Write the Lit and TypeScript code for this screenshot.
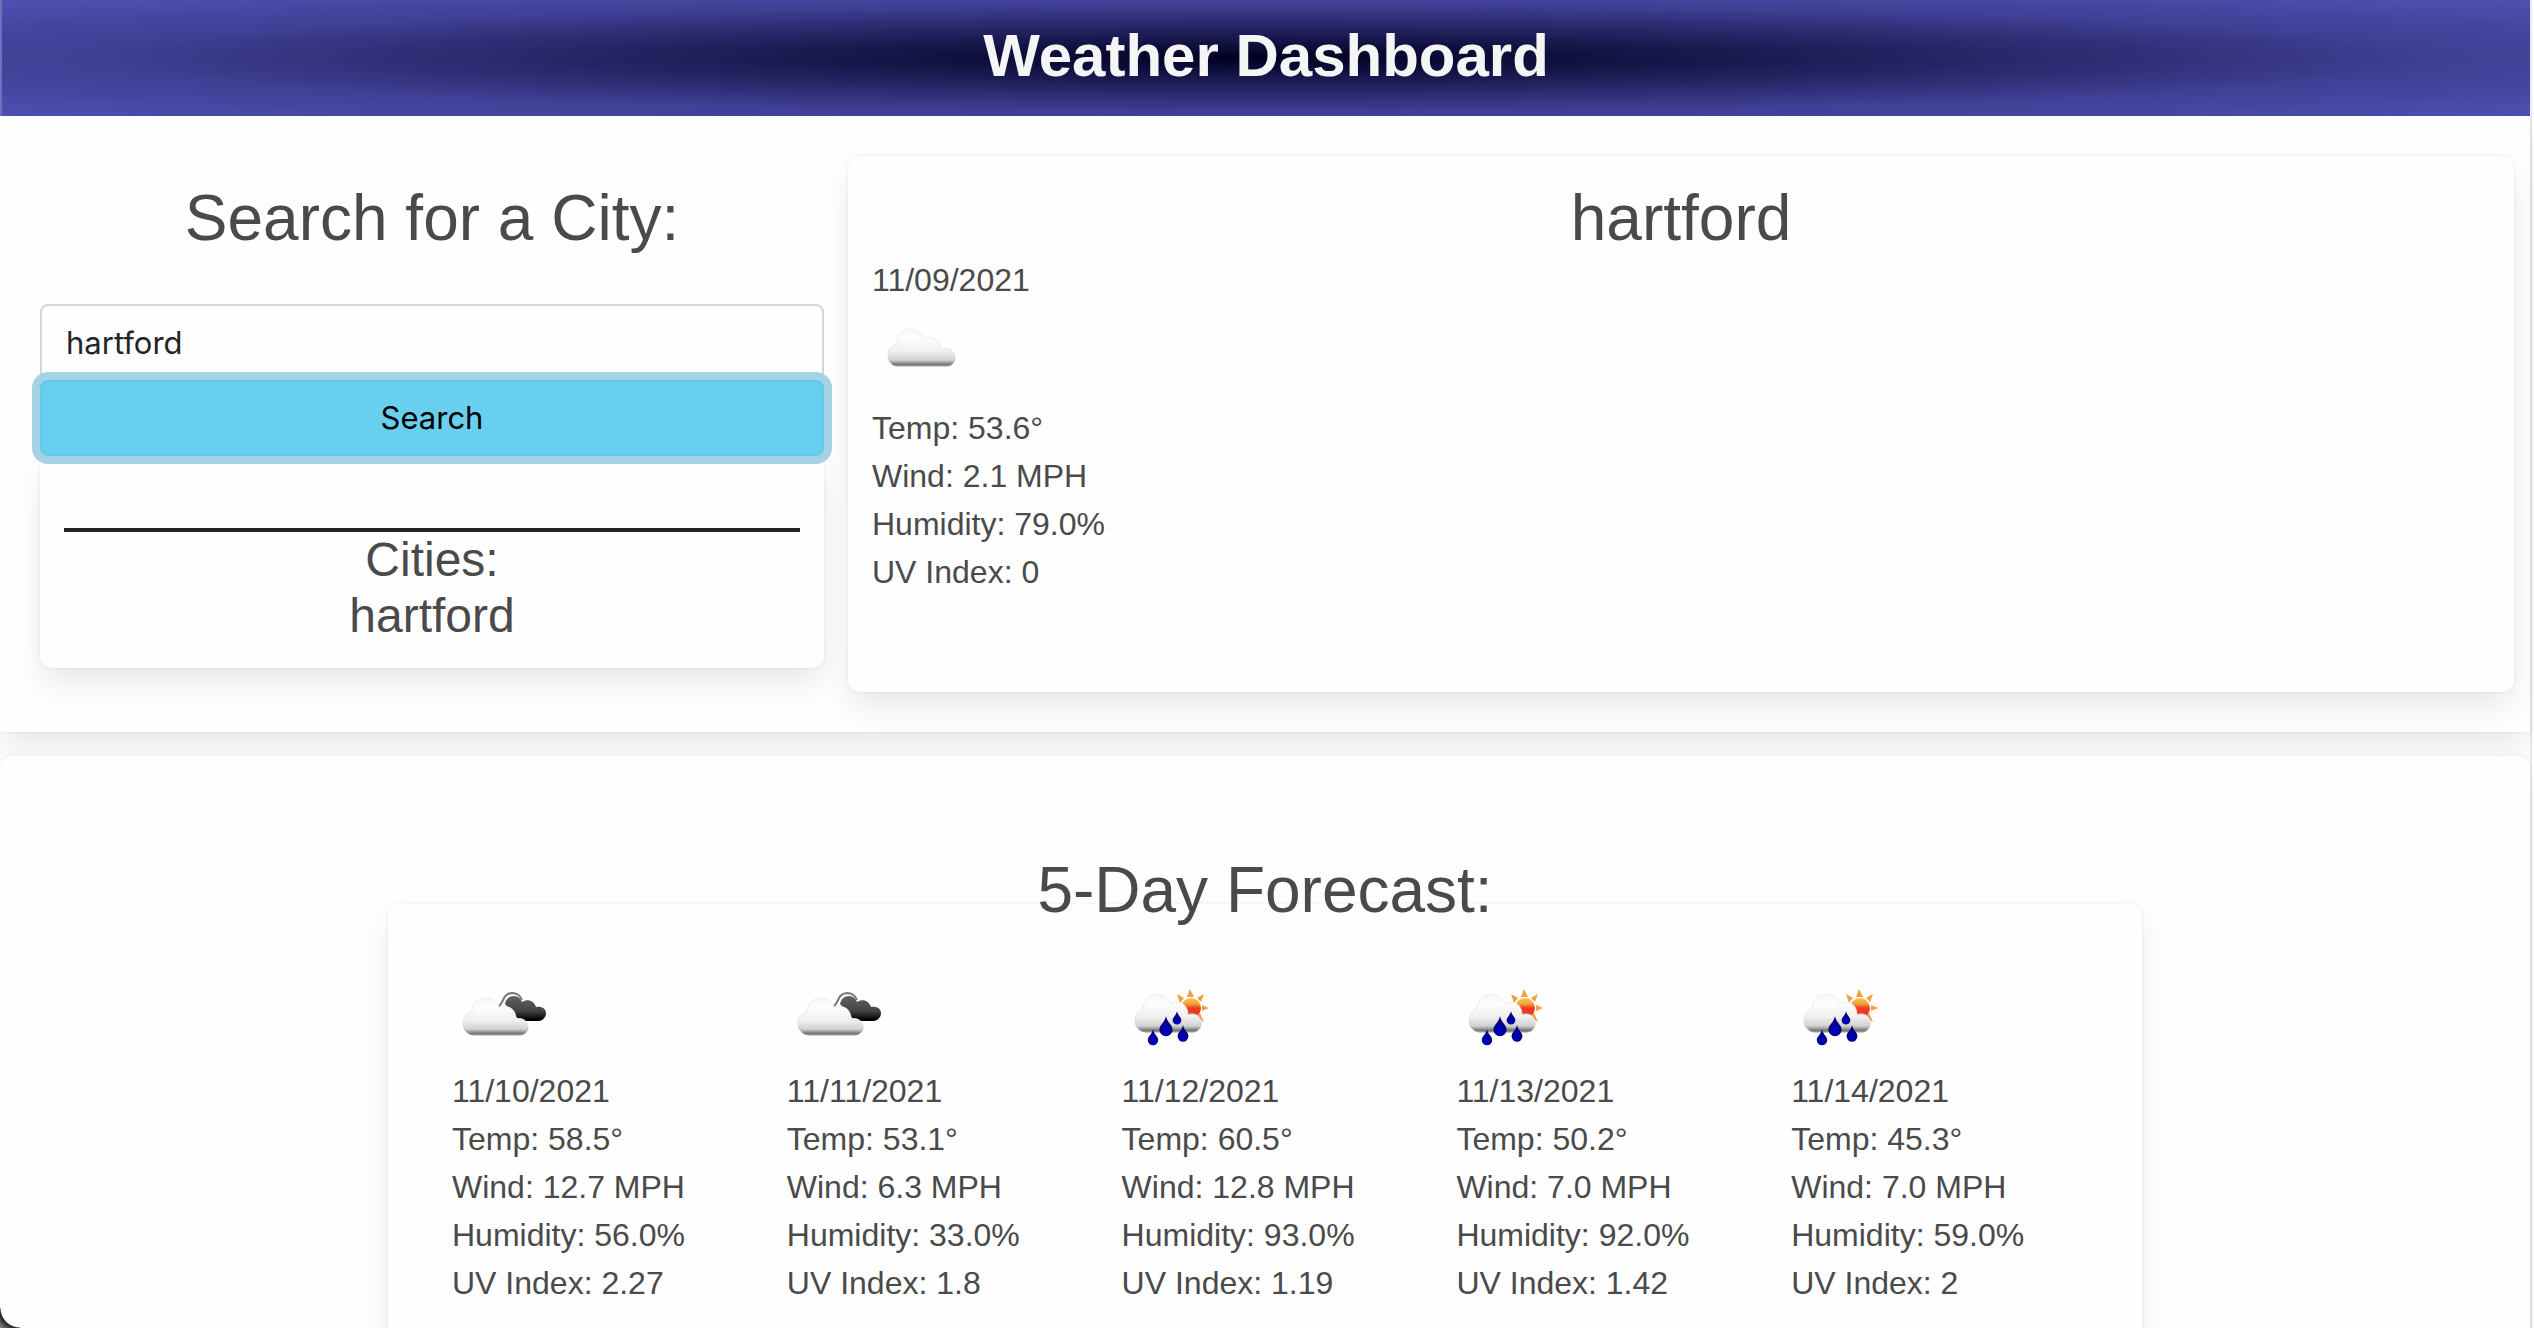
import { LitElement, html, css, svg } from "lit";
import { customElement } from "lit/decorators.js";

type Kind = "cloud" | "broken" | "rain";

interface Day {
  date: string;
  icon: Kind;
  temp: string;
  wind: string;
  humidity: string;
  uv: string;
}

const today: Day = { date: "11/09/2021", icon: "cloud", temp: "53.6", wind: "2.1", humidity: "79.0", uv: "0" };

const forecast: Day[] = [
  { date: "11/10/2021", icon: "broken", temp: "58.5", wind: "12.7", humidity: "56.0", uv: "2.27" },
  { date: "11/11/2021", icon: "broken", temp: "53.1", wind: "6.3", humidity: "33.0", uv: "1.8" },
  { date: "11/12/2021", icon: "rain", temp: "60.5", wind: "12.8", humidity: "93.0", uv: "1.19" },
  { date: "11/13/2021", icon: "rain", temp: "50.2", wind: "7.0", humidity: "92.0", uv: "1.42" },
  { date: "11/14/2021", icon: "rain", temp: "45.3", wind: "7.0", humidity: "59.0", uv: "2" },
];

@customElement("weather-icon")
export class WeatherIcon extends LitElement {
  static properties = { kind: { type: String } };
  declare kind: Kind;

  static styles = css`
    :host { display: block; width: 100px; height: 100px; }
    .art { display: block; width: 100px; height: 100px; }
  `;

  private gradients() {
    return svg`
      <defs>
        <linearGradient id="white" x1="0" y1="0" x2="0" y2="1">
          <stop offset="0" stop-color="#f6f6f6" />
          <stop offset="0.25" stop-color="#fdfdfd" />
          <stop offset="0.6" stop-color="#f0f0f0" />
          <stop offset="0.84" stop-color="#d2d2d2" />
          <stop offset="0.96" stop-color="#757575" />
          <stop offset="1" stop-color="#8a8a8a" />
        </linearGradient>
        <linearGradient id="dark" x1="0" y1="0" x2="0" y2="1">
          <stop offset="0" stop-color="#626262" />
          <stop offset="0.6" stop-color="#444444" />
          <stop offset="0.95" stop-color="#000000" />
        </linearGradient>
        <linearGradient id="rim" x1="0" y1="0" x2="0" y2="1">
          <stop offset="0" stop-color="#efefef" />
          <stop offset="0.7" stop-color="#e2e2e2" />
          <stop offset="1" stop-color="#9a9a9a" />
        </linearGradient>
        <linearGradient id="sun" x1="0" y1="0" x2="0" y2="1">
          <stop offset="0" stop-color="#f4c84a" />
          <stop offset="0.3" stop-color="#f2a03a" />
          <stop offset="0.5" stop-color="#ec3a24" />
          <stop offset="1" stop-color="#ec3a24" />
        </linearGradient>
        <radialGradient id="drop" cx="0.5" cy="0.7" r="0.6">
          <stop offset="0" stop-color="#0000d0" />
          <stop offset="1" stop-color="#000064" />
        </radialGradient>
      </defs>`;
  }

  private art() {
    if (this.kind === "cloud") {
      return svg`<path fill="url(#white)" stroke="url(#rim)" stroke-width="1"
        d="M25 62C19 62 16 56 16 50C16 45 20 41 25 40C25 31 31 25 39 25C45 25 50 29 53 35C58 31 66 34 69 45C77 43 83 47 83 53C83 58 80 62 75 62Z" />`;
    }
    if (this.kind === "broken") {
      return svg`
        <path fill="none" stroke="#777777" stroke-width="2" d="M47 39C52 36 50 27 60 26C65 26 68 28 70 33" />
        <path fill="url(#dark)"
          d="M53 37C54 32 57 29 62 29C66 29 69 32 70 35C76 31 82 34 84 40C90 39 94 42 94 46C94 51 90 54 86 54H68Z" />
        <path fill="url(#white)" stroke="url(#rim)" stroke-width="1"
          d="M22 68C15 68 11 62 11 56C11 50 15 46 20 45C20 36 26 31 34 31C41 31 45 35 47 41C56 37 64 42 64 52C71 50 76 55 76 60C76 65 72 68 68 68Z" />`;
    }
    return svg`
      <path fill="#f0a040"
        d="M65 30L68 22L72 30ZM75 31L82 27L79 35ZM80 38L87 41L80 44ZM78 46L82 55L74 50ZM62 31L55 27L58 36Z" />
      <circle cx="69" cy="41" r="10" fill="url(#sun)" />
      <path fill="url(#white)" stroke="url(#rim)" stroke-width="1"
        d="M24 65C17 65 13 59 13 53C13 47 17 43 21 41C22 32 28 27 35 27C42 27 46 31 49 37C58 32 66 38 66 48C72 45 79 49 79 56C79 61 76 65 71 65Z" />
      ${[[31, 63, 0.87], [44, 50, 1.1], [55, 45, 0.72], [61, 59, 0.9]].map(
        ([x, y, s]) => svg`<path fill="url(#drop)" transform="translate(${x} ${y}) scale(${s})"
          d="M0-1C1 5 6 7 6 11.500A6 6 0 0 1-6 11.500C-6 7-1 5 0-1Z" />`,
      )}`;
  }

  render() {
    return html`<svg class="art" viewBox="0 0 100 100" aria-hidden="true">${this.gradients()}${this.art()}</svg>`;
  }
}

@customElement("app-root")
export class AppRoot extends LitElement {
  static styles = css`
    :host {
      display: block;
      box-sizing: border-box;
      height: 100vh;
      overflow: hidden auto;
      scrollbar-width: none;
      background: #fefefe;
      color: #4a4a4a;
      font-family: "Liberation Sans", Arial, sans-serif;
      font-size: 32px;
      line-height: 48px;
    }
    * { box-sizing: border-box; }
    h1, h2, h3, p, ul { margin: 0; padding: 0; font-weight: 400; }
    ul { list-style: none; }
    .page { margin-right: 2px; border-right: 2px solid #ebebeb; }
    .banner {
      padding: 20px 0 24px;
      border-left: 2px solid #7070bd;
      background: radial-gradient(#000022, #3f3f94 65%, #5050b4);
      color: #f5f5f5;
      text-align: center;
    }
    .title { font-size: 60px; line-height: 72px; font-weight: 700; }
    .card, .top {
      background: #fefefe;
      box-shadow: 0 16px 32px -4px rgba(10, 10, 10, 0.1), 0 0 0 2px rgba(10, 10, 10, 0.02);
    }
    .card { border-radius: 12px; }
    .top {
      display: grid;
      grid-template-columns: 784fr 1666fr;
      gap: 24px;
      align-items: start;
      padding: 40px 16px 40px 40px;
    }
    .heading { font-size: 64px; line-height: 76px; text-align: center; }
    .search { display: flex; flex-direction: column; padding-top: 24px; }
    .field, .button {
      height: 76px;
      border: 2px solid #ced4da;
      border-radius: 8px;
      font: 31px/48px Inter, sans-serif;
    }
    .field {
      width: 100%;
      margin-top: 48px;
      padding: 0 24px;
      background: #fefefe;
      color: #212529;
    }
    .button {
      z-index: 1;
      border-color: #62c9ec;
      background: #68cfee;
      box-shadow: 0 0 0 8px #a5d3e3;
      color: #000;
    }
    .history { padding: 72px 24px 24px; text-align: center; font-size: 48px; line-height: 56px; }
    .cities { border-top: 4px solid #212529; font-size: 48px; line-height: 56px; }
    .current { min-height: 536px; padding: 24px; }
    .outlook { margin-top: 24px; padding: 96px 388px 48px; position: relative; }
    .outlook-title { position: relative; z-index: 1; margin-bottom: -24px; }
    .days { display: grid; grid-template-columns: repeat(5, 1fr); padding: 63px 16px 48px 64px; }
    .corner {
      position: fixed;
      left: 0;
      bottom: 0;
      width: 20px;
      height: 20px;
      background: radial-gradient(circle at 100% 0, transparent 19px, #222222 20px, #8a8a8a 28px);
    }
  `;

  private readings(day: Day) {
    return html`
      <p>Temp: ${day.temp}°</p>
      <p>Wind: ${day.wind} MPH</p>
      <p>Humidity: ${day.humidity}%</p>
      <p>UV Index: ${day.uv}</p>
    `;
  }

  render() {
    return html`
      <div class="page">
        <header class="banner"><h1 class="title">Weather Dashboard</h1></header>
        <main>
          <div class="top">
            <form class="search" @submit=${(e: Event) => e.preventDefault()}>
              <h2 class="heading"><label for="city">Search for a City:</label></h2>
              <input class="field" id="city" type="text" value="hartford" />
              <button class="button" type="submit">Search</button>
              <div class="history card">
                <h3 class="cities">Cities:</h3>
                <ul><li>hartford</li></ul>
              </div>
            </form>
            <section class="current card">
              <h2 class="heading">hartford</h2>
              <p>${today.date}</p>
              <weather-icon .kind=${today.icon}></weather-icon>
              ${this.readings(today)}
            </section>
          </div>
          <section class="outlook card">
            <h2 class="heading outlook-title">5-Day Forecast:</h2>
            <div class="days card">
              ${forecast.map(
                (day) => html`<article>
                  <weather-icon .kind=${day.icon}></weather-icon>
                  <p>${day.date}</p>
                  ${this.readings(day)}
                </article>`,
              )}
            </div>
          </section>
        </main>
        <div class="corner"></div>
      </div>
    `;
  }
}
